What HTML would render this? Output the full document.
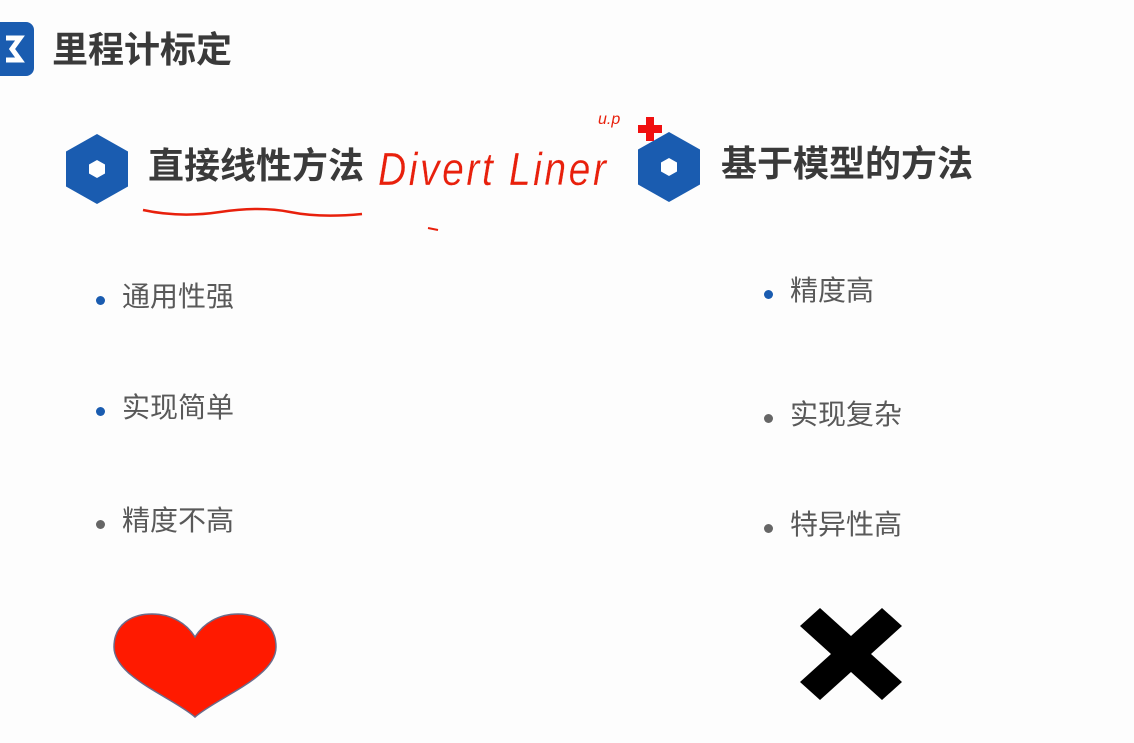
<!DOCTYPE html>
<html><head><meta charset="utf-8"><style>
body{margin:0;width:1134px;height:743px;background:#fdfdfd;position:relative;overflow:hidden;font-family:"Liberation Sans","Noto Sans CJK SC",sans-serif}
.a{position:absolute;white-space:nowrap;line-height:1}
.t{font-size:36px;font-weight:bold;color:#3a3a3a}
.h{font-size:36px;font-weight:bold;color:#3a3a3a}
.b{font-size:28px;color:#595959}
.d{position:absolute;width:9px;height:9px;border-radius:50%}
</style></head><body>
<svg class="a" style="left:0;top:22px" width="36" height="54" viewBox="0 0 36 54"><rect x="-10" y="0" width="44" height="54" rx="8" fill="#1a5cb0"/><path d="M6 16 L20 16 L12 27 L20 38 L6 38" stroke="#fff" stroke-width="5" fill="none"/></svg>
<div class="a t" style="left:52px;top:32px">里程计标定</div>
<svg class="a" style="left:66px;top:134px" width="62" height="70" viewBox="0 0 62 70"><polygon points="31,0 62,17.5 62,52.5 31,70 0,52.5 0,17.5" fill="#1a5cb0"/><polygon points="31,26 39,30.5 39,39.5 31,44 23,39.5 23,30.5" fill="#fff"/></svg>
<svg class="a" style="left:638px;top:132px" width="62" height="70" viewBox="0 0 62 70"><polygon points="31,0 62,17.5 62,52.5 31,70 0,52.5 0,17.5" fill="#1a5cb0"/><polygon points="31,26 39,30.5 39,39.5 31,44 23,39.5 23,30.5" fill="#fff"/></svg>
<div class="a h" style="left:148px;top:148px">直接线性方法</div>
<div class="a h" style="left:721px;top:146px">基于模型的方法</div>
<div class="a" style="left:378px;top:146px;font-size:46px;color:#e8200c;letter-spacing:3px;font-style:italic;transform:scaleX(0.85);transform-origin:left;-webkit-text-stroke:0.3px #fdfdfd">Divert Liner</div>
<div class="a" style="left:598px;top:112px;font-size:16px;color:#e8200c;font-style:italic">u.p</div>
<svg class="a" style="left:638px;top:117px" width="24" height="24"><path d="M8 0h8v8h8v8h-8v8h-8v-8h-8v-8h8z" fill="#f01010"/></svg>
<svg class="a" style="left:140px;top:200px" width="300" height="40"><path d="M3 10 Q40 18 80 12 T150 12 T222 14" stroke="#e8200c" stroke-width="2.5" fill="none"/><path d="M288 28 l10 2" stroke="#e8200c" stroke-width="2"/></svg>
<div class="d" style="left:96px;top:296px;background:#1a5cb0"></div><div class="a b" style="left:122px;top:283px">通用性强</div>
<div class="d" style="left:96px;top:407px;background:#1a5cb0"></div><div class="a b" style="left:122px;top:394px">实现简单</div>
<div class="d" style="left:96px;top:520px;background:#666"></div><div class="a b" style="left:122px;top:507px">精度不高</div>
<div class="d" style="left:764px;top:290px;background:#1a5cb0"></div><div class="a b" style="left:790px;top:277px">精度高</div>
<div class="d" style="left:764px;top:414px;background:#666"></div><div class="a b" style="left:790px;top:401px">实现复杂</div>
<div class="d" style="left:764px;top:524px;background:#666"></div><div class="a b" style="left:790px;top:511px">特异性高</div>
<svg class="a" style="left:112px;top:612px" width="166" height="108" viewBox="0 0 166 108"><path d="M83 105 C60 85 2 65 2 35 C2 12 20 2 40 2 C60 2 75 12 83 25 C91 12 106 2 126 2 C146 2 164 12 164 35 C164 65 106 85 83 105Z" fill="#ff1a00" stroke="#6b6b8a" stroke-width="1.5"/></svg>
<svg class="a" style="left:800px;top:608px" width="102" height="92" viewBox="0 0 102 92"><path d="M0 18 L20 0 L51 28 L82 0 L102 18 L71 46 L102 74 L82 92 L51 64 L20 92 L0 74 L31 46Z" fill="#000"/></svg>
</body></html>
